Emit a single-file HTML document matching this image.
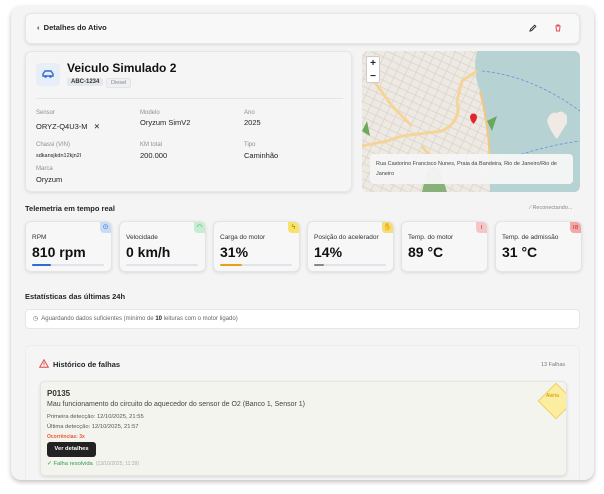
<!DOCTYPE html>
<html><head><meta charset="utf-8"><style>
*{box-sizing:border-box;margin:0;padding:0}
body{width:604px;height:494px;background:#fff;font-family:"Liberation Sans",sans-serif;color:#1f2328;position:relative;overflow:hidden}
.panel{position:absolute;left:11px;top:6px;width:583px;height:474px;background:#f4f4f4;border-radius:10px;box-shadow:0 2px 5px rgba(0,0,0,.25);overflow:hidden}
.abs{position:absolute}
.card{position:absolute;background:#f5f5f5;border:1px solid #e6e6e6;border-radius:6px;box-shadow:0 1px 3px rgba(0,0,0,.1)}
.lbl{font-size:6px;color:#8a8f99}
.val{font-size:7.5px;color:#222;font-weight:500}
.tc{position:absolute;top:221px;width:87px;height:51px;background:#f7f7f7;border:1px solid #e4e4e4;border-radius:6px;box-shadow:0 1px 3px rgba(0,0,0,.1)}
.tc .t{position:absolute;left:6px;top:12px;font-size:6.5px;color:#333}
.tc .v{position:absolute;left:6px;top:22px;font-size:14px;font-weight:bold;color:#111}
.tc .bar{position:absolute;left:6px;top:42px;width:72px;height:2px;background:#dfe3ea;border-radius:1px}
.tc .bar i{display:block;height:2px;border-radius:1px}
.tc .ic{position:absolute;right:0;top:0;width:11px;height:11px;border-radius:0 5px 0 4px;font-size:7px;text-align:center;line-height:11px}
</style></head><body>
<div class="panel"></div>
<!-- header -->
<div class="card" style="left:25px;top:13px;width:555px;height:31px;background:#f8f8f8">
 <div class="abs" style="left:11px;top:9px;font-size:7.5px;font-weight:bold">‹&nbsp; Detalhes do Ativo</div>
 <svg class="abs" style="left:503px;top:10px" width="8" height="8" viewBox="0 0 8 8"><path d="M1 7L1.5 5.3 5.6 1.2 6.8 2.4 2.7 6.5Z" fill="none" stroke="#333" stroke-width="1"/></svg>
 <svg class="abs" style="left:528px;top:10px" width="8" height="8" viewBox="0 0 8 8"><path d="M1.5 2H6.5M3 2V1H5V2M2 2.5L2.5 7H5.5L6 2.5" fill="none" stroke="#e5484d" stroke-width="1"/></svg>
</div>
<!-- vehicle -->
<div class="card" style="left:25px;top:51px;width:327px;height:141px">
 <div class="abs" style="left:10px;top:11px;width:24px;height:23px;background:#e8eef8;border-radius:4px"></div>
 <svg class="abs" style="left:15px;top:17px" width="14" height="10" viewBox="0 0 14 10"><path d="M2 7V5L4 2H10L12 5V7Z" fill="none" stroke="#2b6fd6" stroke-width="1.4"/><circle cx="4.5" cy="7.5" r="1.3" fill="#2b6fd6"/><circle cx="9.5" cy="7.5" r="1.3" fill="#2b6fd6"/></svg>
 <div class="abs" style="left:41px;top:9px;font-size:12px;font-weight:bold;color:#111">Veiculo Simulado 2</div>
 <div class="abs" style="left:41px;top:26px;padding:1px 4px;background:#e4e8ee;border-radius:2px;font-size:6px;font-weight:bold;color:#333">ABC-1234</div>
 <div class="abs" style="left:80px;top:26px;padding:1px 4px;background:#eef0f3;border:1px solid #e0e3e8;border-radius:2px;font-size:5.5px;color:#888">Diesel</div>
 <div class="abs" style="left:10px;top:46px;width:307px;height:1px;background:#e5e5e5"></div>
 <div class="abs lbl" style="left:10px;top:58px">Sensor</div>
 <div class="abs val" style="left:10px;top:70px">ORYZ-Q4U3-M &nbsp;&nbsp;✕</div>
 <div class="abs lbl" style="left:114px;top:58px">Modelo</div>
 <div class="abs val" style="left:114px;top:66px">Oryzum SimV2</div>
 <div class="abs lbl" style="left:218px;top:58px">Ano</div>
 <div class="abs val" style="left:218px;top:66px">2025</div>
 <div class="abs lbl" style="left:10px;top:90px">Chassi (VIN)</div>
 <div class="abs" style="left:10px;top:101px;font-size:5.5px;color:#222">sdkansjkdn12kjn2l</div>
 <div class="abs lbl" style="left:114px;top:90px">KM total</div>
 <div class="abs val" style="left:114px;top:99px">200.000</div>
 <div class="abs lbl" style="left:218px;top:90px">Tipo</div>
 <div class="abs val" style="left:218px;top:99px">Caminhão</div>
 <div class="abs lbl" style="left:10px;top:114px">Marca</div>
 <div class="abs val" style="left:10px;top:123px">Oryzum</div>
</div>
<!-- map -->
<div class="abs" style="left:362px;top:51px;width:218px;height:141px;border-radius:6px;overflow:hidden;background:#b7d2d2">
 <svg class="abs" style="left:0;top:0" width="218" height="141" viewBox="0 0 218 141">
  <defs><pattern id="st" width="9" height="7" patternUnits="userSpaceOnUse" patternTransform="rotate(25)"><path d="M0 3.5H9M4 0V7" stroke="#d8d2ca" stroke-width=".7"/></pattern></defs>
  <path d="M0 0H115Q110 20 118 40Q128 80 128 141H0Z" fill="#eeeae3"/>
  <path d="M0 0H115Q110 20 118 40Q128 80 128 141H0Z" fill="url(#st)"/>
  <path d="M65 120Q75 110 80 125L85 141H60Z" fill="#8ab07a"/>
  <path d="M0 95L25 90L40 85L80 80M5 20L30 55L50 75M80 80Q100 70 95 50L100 30L115 20M60 95Q70 110 85 110" fill="none" stroke="#f5d597" stroke-width="3"/>
  <path d="M118 40Q128 80 128 120" fill="none" stroke="#f5c680" stroke-width="2"/>
  <path d="M125 70L135 65L130 80Z" fill="#6aa85a"/>
  <path d="M0 80L5 70L8 85Z" fill="#6aa85a"/>
  <path d="M205 65Q200 58 195 62Q188 60 185 70Q188 80 195 88Q200 80 205 72Z" fill="#efebe4"/>
  <path d="M120 20Q170 25 218 60M140 110Q180 95 218 90" fill="none" stroke="#6d8fdc" stroke-width=".8" stroke-dasharray="3 2"/>
  <path d="M108 66a3.5 3.5 0 1 1 7 0q0 3 -3.5 7q-3.5 -4 -3.5 -7z" fill="#e0262b"/>
 </svg>
 <div class="abs" style="left:4px;top:5px;width:14px;height:27px;background:#fff;border:1px solid #ccc;border-radius:2px;font-size:10px;font-weight:bold;text-align:center;line-height:13px">+<br>−</div>
 <div class="abs" style="left:8px;top:103px;width:203px;height:30px;background:rgba(245,245,245,.95);border-radius:4px;padding:5px 6px;font-size:5.5px;line-height:10px;color:#444">Rua Castorino Francisco Nunes, Praia da Bandeira, Rio de Janeiro/Rio de Janeiro</div>
</div>
<!-- telemetry -->
<div class="abs" style="left:25px;top:204px;font-size:7.5px;font-weight:bold">Telemetria em tempo real</div>
<div class="abs" style="left:530px;top:205px;font-size:5.5px;color:#888">⁄ Reconectando...</div>
<div class="tc" style="left:25px"><div class="ic" style="background:#c9dcf5;color:#2b6fd6">⊙</div><div class="t">RPM</div><div class="v">810 rpm</div><div class="bar"><i style="width:19px;background:#2b6fd6"></i></div></div>
<div class="tc" style="left:119px"><div class="ic" style="background:#c7ecd0;color:#2a8">◠</div><div class="t">Velocidade</div><div class="v">0 km/h</div><div class="bar"></div></div>
<div class="tc" style="left:213px"><div class="ic" style="background:#f8e36a;color:#a67c00">ϟ</div><div class="t">Carga do motor</div><div class="v">31%</div><div class="bar"><i style="width:22px;background:#e9a11a"></i></div></div>
<div class="tc" style="left:307px"><div class="ic" style="background:#f3dc7a;color:#9a7000">✋</div><div class="t">Posição do acelerador</div><div class="v">14%</div><div class="bar"><i style="width:10px;background:#888"></i></div></div>
<div class="tc" style="left:401px"><div class="ic" style="background:#f5c6c6;color:#c33">ı</div><div class="t">Temp. do motor</div><div class="v">89 °C</div></div>
<div class="tc" style="left:495px"><div class="ic" style="background:#f3a8a8;color:#c33">ıʚ</div><div class="t">Temp. de admissão</div><div class="v">31 °C</div></div>
<!-- stats -->
<div class="abs" style="left:25px;top:292px;font-size:7.5px;font-weight:bold">Estatísticas das últimas 24h</div>
<div class="abs" style="left:25px;top:309px;width:555px;height:20px;background:#fff;border:1px solid #e6e6e6;border-radius:4px;padding:5px 7px;font-size:6px;color:#666">◷&nbsp; Aguardando dados suficientes (mínimo de <b style="color:#222">10</b> leituras com o motor ligado)</div>
<!-- faults -->
<div class="abs" style="left:25px;top:345px;width:555px;height:135px;background:#f5f5f5;border:1px solid #ececec;border-bottom:none;border-radius:6px 6px 0 0"></div>
<svg class="abs" style="left:39px;top:359px" width="10" height="9" viewBox="0 0 10 9"><path d="M5 .8L9.3 8.3H.7Z" fill="none" stroke="#e5484d" stroke-width="1"/><path d="M5 3.5V5.8M5 6.6V7.2" stroke="#e5484d" stroke-width="1"/></svg>
<div class="abs" style="left:53px;top:360px;font-size:7.5px;font-weight:bold">Histórico de falhas</div>
<div class="abs" style="left:541px;top:362px;font-size:5.5px;color:#777">13 Falhas</div>
<div class="abs" style="left:40px;top:381px;width:527px;height:95px;background:#f4f4ef;border:1px solid #e6e6e0;border-radius:5px;box-shadow:0 1px 3px rgba(0,0,0,.12);overflow:hidden">
 <div class="abs" style="left:6px;top:7px;font-size:8px;font-weight:bold;color:#333">P0135</div>
 <div class="abs" style="left:6px;top:19px;font-size:7px;color:#444">Mau funcionamento do circuito do aquecedor do sensor de O2 (Banco 1, Sensor 1)</div>
 <div class="abs" style="left:6px;top:32px;font-size:5.8px;color:#555">Primeira detecção: 12/10/2025, 21:55</div>
 <div class="abs" style="left:6px;top:42px;font-size:5.8px;color:#555">Última detecção: 12/10/2025, 21:57</div>
 <div class="abs" style="left:6px;top:52px;font-size:5px;color:#e53;font-weight:bold">Ocorrências: 3x</div>
 <div class="abs" style="left:6px;top:60px;width:49px;height:15px;background:#222;border-radius:3px;color:#fff;font-size:5.8px;font-weight:bold;text-align:center;line-height:15px">Ver detalhes</div>
 <div class="abs" style="left:6px;top:79px;font-size:5.8px;color:#2a9d4a">✓ Falha resolvida <span style="color:#aaa;font-size:5px">&nbsp;(13/10/2025, 11:39)</span></div>
 <div class="abs" style="left:502px;top:6px;width:26px;height:26px;background:#fbeea0;border:1px solid #f0d060;transform:rotate(45deg)"></div>
 <div class="abs" style="left:505px;top:11px;font-size:5px;color:#d09000">Alerta</div>
</div>
</body></html>
